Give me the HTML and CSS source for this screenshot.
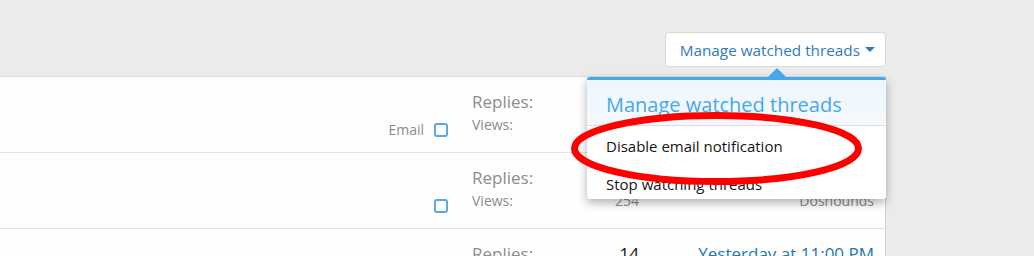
FILE: index.html
```html
<!doctype html>
<html lang="en">
<head>
	<meta charset="UTF-8" />
	<title>Watched threads</title>
<link rel="stylesheet" href="styles.css">
</head>
<body>
	<div class="toolbar">
		<div class="manage">
			<a href="javascript:;" class="manage-btn">Manage watched threads <span class="caret"></span></a>
			<div class="menu">
				<h3 class="menu-header">Manage watched threads</h3>
				<a href="javascript:;" class="menu-item">Disable email notification</a>
				<a href="javascript:;" class="menu-item">Stop watching threads</a>
			</div>
		</div>
	</div>
	<section class="threads">
		<div class="thread">
			<div class="thread-main">
				<label class="email">Email <span class="check"></span></label>
			</div>
			<div class="stats">
				<p class="big"><span>Replies:</span><span>3</span></p>
				<p><span>Views:</span><span>187</span></p>
			</div>
			<div class="latest">
				<p class="big"><a href="javascript:;">Today at 1:12 AM</a></p>
				<p>Doshounds</p>
			</div>
		</div>
		<div class="thread">
			<div class="thread-main">
				<label class="email"><span class="check"></span></label>
			</div>
			<div class="stats">
				<p class="big"><span>Replies:</span><span>9</span></p>
				<p><span>Views:</span><span>254</span></p>
			</div>
			<div class="latest">
				<p class="big"><a href="javascript:;">Today at 12:40 AM</a></p>
				<p>Doshounds</p>
			</div>
		</div>
		<div class="thread">
			<div class="thread-main">
				<label class="email"><span class="check"></span></label>
			</div>
			<div class="stats">
				<p class="big"><span>Replies:</span><span class="dark">14</span></p>
				<p><span>Views:</span><span>402</span></p>
			</div>
			<div class="latest">
				<p class="big"><a href="javascript:;">Yesterday at 11:00 PM</a></p>
				<p>Doshounds</p>
			</div>
		</div>
	</section>
	<svg class="mark" width="1034" height="256" viewBox="0 0 1034 256">
		<ellipse cx="716.5" cy="148.5" rx="142" ry="33" fill="none" stroke="#ff0000" stroke-width="7"/>
	</svg>
</body>
</html>
```

FILE: styles.css
```css
*{
	margin: 0;
	padding: 0;
	box-sizing: border-box;
}
body{
	background: #ebebeb;
	font-family: "Open Sans", "Noto Sans", sans-serif;
	color: #141414;
	height: 256px;
	overflow: hidden;
}
a{
	text-decoration: none;
}
.toolbar{
	display: flex;
	justify-content: flex-end;
	width: 886px;
	padding-top: 32px;
}
.manage{
	position: relative;
}
.manage-btn{
	display: flex;
	align-items: center;
	height: 35px;
	padding: 0 10px 0 14px;
	background: #fff;
	border: 1px solid #d8d8d8;
	border-radius: 4px;
	color: #2f7bbf;
	font-size: 15.3px;
}
.caret{
	margin-left: 5px;
	border-left: 5px solid transparent;
	border-right: 5px solid transparent;
	border-top: 5px solid #2f7bbf;
}
.menu{
	position: absolute;
	top: 45px;
	right: 0;
	width: 299px;
	background: #fff;
	border-top: 3px solid #47a7eb;
	border-radius: 3px;
	box-shadow: 0 4px 10px rgba(0,0,0,.3);
	z-index: 2;
}
.menu:before{
	content: "";
	position: absolute;
	top: -12px;
	left: 181px;
	border-left: 9px solid transparent;
	border-right: 9px solid transparent;
	border-bottom: 9px solid #47a7eb;
}
.menu-header{
	height: 46px;
	padding: 11px 19px 0;
	background: linear-gradient(#edf6fd, #f5f9fe);
	border-bottom: 1px solid #dcdcdc;
	color: #47a7eb;
	font-size: 20px;
	font-weight: normal;
	line-height: 28px;
}
.menu-item{
	display: block;
	padding: 10px 19px 8px;
	color: #141414;
	font-size: 15px;
	line-height: 20px;
}
.menu-item:last-child{
	padding-bottom: 5px;
}
.threads{
	width: 886px;
	margin-top: 9px;
	background: #fefefe;
	border-top: 1px solid #dedede;
	border-right: 1px solid #d4d4d4;
}
.thread{
	display: flex;
	height: 76px;
	padding: 14px 11px 0 0;
	border-bottom: 1px solid #e2e2e2;
	color: #8c8c8c;
}
.thread-main{
	flex: 1;
	display: flex;
	justify-content: flex-end;
	padding: 31px 24px 0 0;
}
.email{
	display: flex;
	align-items: center;
	height: 15px;
	font-size: 14px;
}
.check{
	width: 14px;
	height: 14px;
	margin-left: 10px;
	border: 2px solid #5aa8ea;
	border-radius: 3px;
}
.stats{
	width: 167px;
}
.stats p, .latest p{
	display: flex;
	justify-content: space-between;
	font-size: 14px;
	line-height: 24px;
}
.stats p.big, .latest p.big{
	font-size: 17px;
	line-height: 22px;
}
.dark{
	color: #141414;
}
.latest{
	width: 235px;
}
.latest p{
	justify-content: flex-end;
}
.latest a{
	color: #2577b1;
}
.mark{
	position: absolute;
	top: 0;
	left: 0;
	z-index: 3;
	pointer-events: none;
}
```
